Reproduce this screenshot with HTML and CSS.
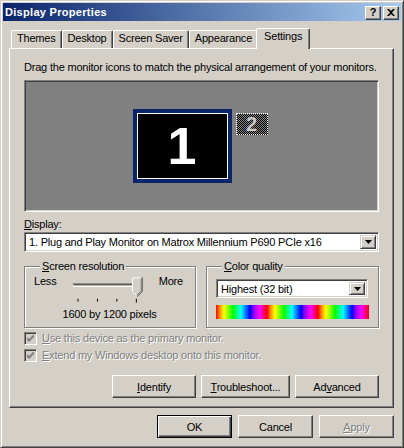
FILE: index.html
```html
<!DOCTYPE html>
<html lang="en">
<head>
  <meta charset="UTF-8">
  <title>Display Properties</title>
  <link rel="stylesheet" href="styles.css">
</head>
<body>
  <div class="window">
    <div class="titlebar">
      <span class="title">Display Properties</span>
      <div class="caption-buttons">
        <button class="cap-btn help">?</button>
        <button class="cap-btn close">
          <svg width="8" height="7" viewBox="0 0 8 7"><path d="M0 0h2l2 2 2-2h2L5 3.5 8 7H6L4 5 2 7H0l3-3.5z" fill="#000"/></svg>
        </button>
      </div>
    </div>

    <div class="dialog">
      <div class="tabs">
        <div class="tab">Themes</div>
        <div class="tab">Desktop</div>
        <div class="tab">Screen Saver</div>
        <div class="tab">Appearance</div>
        <div class="tab active">Settings</div>
      </div>

      <div class="page">
        <p class="hint">Drag the monitor icons to match the physical arrangement of your monitors.</p>

        <div class="monitors">
          <div class="arrangement">
            <div class="monitor primary"><span>1</span></div>
            <div class="monitor secondary"><span>2</span></div>
          </div>
        </div>

        <div class="field-label"><u>D</u>isplay:</div>
        <div class="combo">
          <span class="combo-text">1. Plug and Play Monitor on Matrox Millennium P690 PCIe x16</span>
          <span class="combo-btn"><svg width="7" height="4" viewBox="0 0 7 4"><path d="M0 0h7L3.5 4z" fill="#000"/></svg></span>
        </div>

        <div class="groups">
          <fieldset class="group resolution">
            <legend><u>S</u>creen resolution</legend>
            <div class="slider-row">
              <span>Less</span>
              <svg class="slider" width="94" height="29" viewBox="0 0 94 29">
                <!-- channel -->
                <rect x="10" y="7" width="71" height="1" fill="#808080"/>
                <rect x="11" y="8" width="70" height="1" fill="#404040"/>
                <rect x="10" y="10" width="72" height="1" fill="#fff"/>
                <rect x="81" y="7" width="1" height="4" fill="#fff"/>
                <!-- thumb -->
                <path d="M71 1h11v14l-5.5 5.5L71 15z" fill="#d4d0c8"/>
                <path d="M71.5 15V1.5H81" fill="none" stroke="#fff"/>
                <path d="M71.5 15.5l4.5 4.5" fill="none" stroke="#fff"/>
                <path d="M81.5 1v14.5L76.5 20.5" fill="none" stroke="#404040"/>
                <path d="M80.5 2v13L76 19.5" fill="none" stroke="#808080"/>
                <!-- ticks -->
                <path d="M15.5 23v3M35.5 23v3M55.5 23v3M75.5 23v4" stroke="#000"/>
              </svg>
              <span>More</span>
            </div>
            <div class="res-value">1600 by 1200 pixels</div>
          </fieldset>

          <fieldset class="group quality">
            <legend><u>C</u>olor quality</legend>
            <div class="combo small">
              <span class="combo-text">Highest (32 bit)</span>
              <span class="combo-btn"><svg width="7" height="4" viewBox="0 0 7 4"><path d="M0 0h7L3.5 4z" fill="#000"/></svg></span>
            </div>
            <div class="spectrum"></div>
          </fieldset>
        </div>

        <div class="check disabled">
          <span class="box"><svg width="7" height="7" viewBox="0 0 7 7"><path d="M0 2v3l2 2 5-5V-1L2 4z" fill="#808080"/></svg></span>
          <span><u>U</u>se this device as the primary monitor.</span>
        </div>
        <div class="check disabled">
          <span class="box"><svg width="7" height="7" viewBox="0 0 7 7"><path d="M0 2v3l2 2 5-5V-1L2 4z" fill="#808080"/></svg></span>
          <span><u>E</u>xtend my Windows desktop onto this monitor.</span>
        </div>

        <div class="page-buttons">
          <button class="btn identify"><u>I</u>dentify</button>
          <button class="btn troubleshoot"><u>T</u>roubleshoot...</button>
          <button class="btn advanced">Ad<u>v</u>anced</button>
        </div>
      </div>

      <div class="dialog-buttons">
        <button class="btn default">OK</button>
        <button class="btn">Cancel</button>
        <button class="btn disabled"><u>A</u>pply</button>
      </div>
    </div>
  </div>
</body>
</html>
```

FILE: styles.css
```css
* {
  box-sizing: border-box;
}

body {
  margin: 0;
  background: #d4d0c8;
  font-family: "Liberation Sans", Arial, sans-serif;
  font-size: 11px;
  letter-spacing: -0.2px;
  color: #000;
}

u {
  text-decoration: underline;
  text-underline-offset: 1px;
}

/* window frame */
.window {
  width: 404px;
  height: 448px;
  border: 1px solid;
  border-color: #d4d0c8 #404040 #404040 #d4d0c8;
  box-shadow: inset 1px 1px #fff, inset -1px -1px #808080;
  padding: 2px;
  background: #d4d0c8;
}

.titlebar {
  height: 18px;
  display: flex;
  align-items: center;
  justify-content: space-between;
  padding: 0 2px 0 2px;
  background: linear-gradient(to right, #0a246a, #a6caf0);
}

.title {
  color: #fff;
  font-weight: bold;
  font-size: 11px;
  letter-spacing: 0.3px;
}

.caption-buttons {
  display: flex;
  gap: 2px;
  padding-top: 1px;
}

.cap-btn {
  width: 16px;
  height: 14px;
  padding: 0;
  display: flex;
  align-items: center;
  justify-content: center;
  background: #d4d0c8;
  border: 1px solid;
  border-color: #fff #404040 #404040 #fff;
  box-shadow: inset -1px -1px #808080;
  font-family: "Liberation Sans", Arial, sans-serif;
  font-weight: bold;
  font-size: 11px;
  line-height: 1;
  color: #000;
}

/* dialog body */
.dialog {
  padding: 7px 7px 0 6px;
}

.tabs {
  display: flex;
  align-items: flex-end;
  height: 20px;
  padding-left: 2px;
}

.tab {
  height: 18px;
  padding: 1px 5px 0 5px;
  line-height: 13px;
  border: 1px solid;
  border-bottom: none;
  border-color: #fff #404040 transparent #fff;
  border-radius: 2px 2px 0 0;
  box-shadow: inset -1px 0 #808080;
  white-space: nowrap;
}

.tab.active {
  position: relative;
  z-index: 1;
  height: 21px;
  margin: 0 -2px -1px -2px;
  padding: 1px 7px 0 7px;
  background: #d4d0c8;
}

.page {
  height: 360px;
  padding: 12px 14px 0 14px;
  border: 1px solid;
  border-color: #fff #404040 #404040 #fff;
  box-shadow: inset -1px -1px #808080;
}

.hint {
  margin: 0;
  line-height: 13px;
  white-space: nowrap;
}

.monitors {
  margin-top: 6px;
  height: 132px;
  display: flex;
  align-items: center;
  justify-content: center;
  background: #808080;
  border: 1px solid;
  border-color: #808080 #fff #fff #808080;
  box-shadow: inset 1px 1px #404040, inset -1px -1px #d4d0c8;
}

.arrangement {
  display: flex;
  align-items: flex-start;
  gap: 4px;
  margin-right: 3px;
}

.monitor {
  display: flex;
  align-items: center;
  justify-content: center;
  letter-spacing: 0;
}

.monitor.primary {
  width: 99px;
  height: 74px;
  border: 4px solid #0a246a;
  background: #000;
  box-shadow: inset 0 0 0 1px #fff;
  color: #fff;
  font-size: 52px;
  font-weight: bold;
  line-height: 1;
}

.monitor.secondary {
  width: 32px;
  height: 22px;
  margin-top: 4px;
  border: 1px dotted #fff;
  background: repeating-conic-gradient(#000 0 25%, #808080 0 50%) 0 0 / 2px 2px;
  color: #c8c8c8;
  font-size: 20px;
  font-weight: bold;
  line-height: 1;
}

.field-label {
  margin-top: 6px;
  line-height: 13px;
}

/* drop-down lists */
.combo {
  margin-top: 1px;
  height: 20px;
  display: flex;
  align-items: stretch;
  background: #fff;
  border: 1px solid;
  border-color: #808080 #fff #fff #808080;
  box-shadow: inset 1px 1px #404040, inset -1px -1px #d4d0c8;
  padding: 2px;
}

.combo.small {
  height: 19px;
  margin-top: 6px;
  margin-right: 1px;
}

.combo-text {
  flex: 1;
  padding-left: 2px;
  line-height: 14px;
  white-space: nowrap;
  overflow: hidden;
}

.combo-btn {
  width: 16px;
  display: flex;
  align-items: center;
  justify-content: center;
  background: #d4d0c8;
  border: 1px solid;
  border-color: #d4d0c8 #404040 #404040 #d4d0c8;
  box-shadow: inset 1px 1px #fff, inset -1px -1px #808080;
}

/* group boxes */
.groups {
  margin-top: 8px;
  display: flex;
  gap: 10px;
}

.group {
  margin: 0;
  min-width: 0;
  border: 1px solid #808080;
  box-shadow: inset 1px 1px #fff, 1px 1px #fff;
}

.group legend {
  padding: 0 2px;
  margin-left: 6px;
  line-height: 13px;
  background: #d4d0c8;
}

.resolution {
  width: 172px;
  padding: 2px 12px 6px 9px;
}

.quality {
  flex: 1;
  padding: 0 9px 8px 9px;
}

.slider-row {
  display: flex;
  align-items: flex-start;
  line-height: 13px;
}

.slider {
  display: block;
  margin: 1px 4px 0 7px;
}

.res-value {
  margin-top: 3px;
  margin-left: 2px;
  text-align: center;
  line-height: 13px;
}

.spectrum {
  margin-top: 7px;
  height: 14px;
  background: repeating-linear-gradient(to right,
    #ff0000 0, #ff9900 4px, #ffff00 8px, #00ff00 17px, #00ffff 25px,
    #0000ff 34px, #9900ff 38px, #ff00ff 44px, #ff0000 51px);
}

/* check boxes */
.check {
  display: flex;
  align-items: center;
  gap: 5px;
  height: 13px;
  margin-top: 4px;
  line-height: 13px;
  white-space: nowrap;
}

.check + .check {
  margin-top: 4px;
}

.check .box {
  width: 13px;
  height: 13px;
  display: flex;
  align-items: center;
  justify-content: center;
  border: 1px solid;
  border-color: #808080 #fff #fff #808080;
  box-shadow: inset 1px 1px #404040, inset -1px -1px #d4d0c8;
  background: #d4d0c8;
}

.disabled {
  color: #808080;
  text-shadow: 1px 1px #fff;
}

/* push buttons */
.btn {
  height: 23px;
  padding: 0;
  font-family: "Liberation Sans", Arial, sans-serif;
  font-size: 11px;
  letter-spacing: -0.2px;
  color: #000;
  background: #d4d0c8;
  border: 1px solid;
  border-color: #fff #404040 #404040 #fff;
  box-shadow: inset -1px -1px #808080;
}

.btn.default {
  border-color: #000;
  box-shadow: inset 1px 1px #fff, inset -1px -1px #404040, inset -2px -2px #808080;
}

.btn.disabled {
  color: #808080;
}

.page-buttons {
  margin-top: 13px;
  display: flex;
  justify-content: flex-end;
  gap: 5px;
}

.identify,
.advanced {
  width: 84px;
}

.troubleshoot {
  width: 89px;
}

.dialog-buttons {
  margin-top: 7px;
  display: flex;
  justify-content: flex-end;
  gap: 6px;
}

.dialog-buttons .btn {
  width: 75px;
}
```
